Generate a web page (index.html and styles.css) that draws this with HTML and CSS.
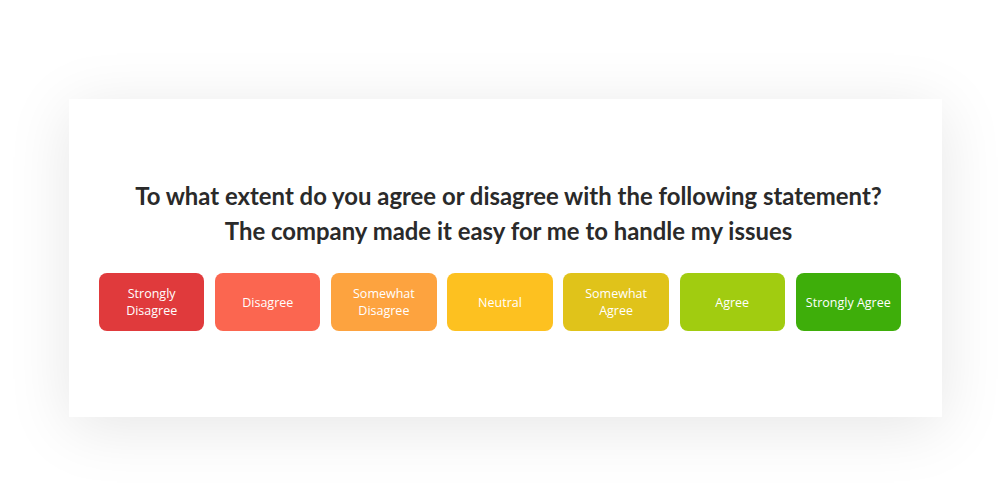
FILE: index.html
```html
<!DOCTYPE html>
<html lang="en">
<head>
<meta charset="utf-8">
<title>Survey question</title>
<link rel="stylesheet" href="styles.css">
</head>
<body>
  <main class="card">
    <h1 class="question">To what extent do you agree or disagree with the following statement?<br>The company made it easy for me to handle my issues</h1>
    <div class="scale">
      <button class="choice c1">Strongly<br>Disagree</button>
      <button class="choice c2">Disagree</button>
      <button class="choice c3">Somewhat<br>Disagree</button>
      <button class="choice c4">Neutral</button>
      <button class="choice c5">Somewhat<br>Agree</button>
      <button class="choice c6">Agree</button>
      <button class="choice c7">Strongly Agree</button>
    </div>
  </main>
</body>
</html>
```
FILE: styles.css
```css
html, body {
  margin: 0;
  padding: 0;
  background: #ffffff;
}

body {
  width: 1000px;
  height: 500px;
  padding: 99px 0 0 69px;
  box-sizing: border-box;
  overflow: hidden;
}

.card {
  width: 873px;
  height: 318px;
  box-sizing: border-box;
  background: #ffffff;
  box-shadow: 0 10px 60px rgba(0, 0, 0, 0.10);
  padding: 79px 41px 0 30px;
  display: flex;
  flex-direction: column;
  align-items: center;
}

.question {
  margin: 0 0 0 17px;
  font-family: Lato, "Liberation Sans", sans-serif;
  font-weight: 700;
  font-size: 23.9px;
  line-height: 35px;
  color: #2a2a2a;
  text-align: center;
  white-space: nowrap;
}

.scale {
  margin-top: 25px;
  width: 100%;
  display: flex;
  gap: 10.8px;
}

.choice {
  flex: 1;
  height: 58px;
  border: 0;
  border-radius: 8px;
  padding: 0 6px;
  font-family: "Open Sans", "Noto Sans", sans-serif;
  font-weight: 500;
  font-size: 12.5px;
  line-height: 17px;
  color: #ffffff;
  text-align: center;
}

.c1 { background: #e03a3c; }
.c2 { background: #fb6650; }
.c3 { background: #fda33f; }
.c4 { background: #fdc120; }
.c5 { background: #e0c31a; }
.c6 { background: #a1cc10; }
.c7 { background: #3eae0a; }
```
